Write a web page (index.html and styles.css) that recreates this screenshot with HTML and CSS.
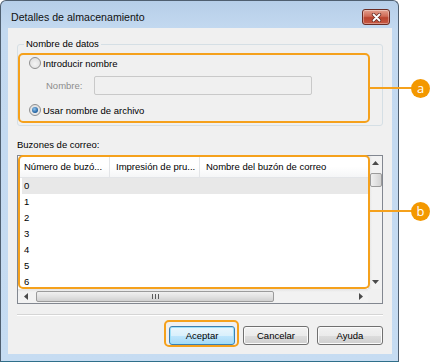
FILE: index.html
```html
<!DOCTYPE html>
<html lang="es">
<head>
    <meta charset="UTF-8">
    <meta name="viewport" content="width=device-width, initial-scale=1.0">
    <title>Detalles de almacenamiento</title>
    <link rel="stylesheet" href="styles.css">
</head>
<body>
<div class="stage">
    <div class="window">
        <div class="titlebar">
            <span class="title">Detalles de almacenamiento</span>
            <div class="close">
                <svg width="11" height="9" viewBox="0 0 11 9">
                    <path d="M2.5 1.5 L8.5 7.5 M8.5 1.5 L2.5 7.5" stroke="#6a2f27" stroke-width="3.4" stroke-linecap="round"/>
                    <path d="M2.5 1.5 L8.5 7.5 M8.5 1.5 L2.5 7.5" stroke="#fff" stroke-width="1.8" stroke-linecap="round"/>
                </svg>
            </div>
        </div>

        <div class="client">
            <fieldset class="group">
                <legend>Nombre de datos</legend>
                <div class="radio-row"><span class="radio"></span>Introducir nombre</div>
                <div class="name-row"><span class="muted">Nombre:</span><span class="field"></span></div>
                <div class="radio-row"><span class="radio checked"></span>Usar nombre de archivo</div>
            </fieldset>

            <div class="list-label">Buzones de correo:</div>
            <div class="list">
                <div class="list-body">
                    <div class="list-head">
                        <span class="col col-1">Número de buzó...</span>
                        <span class="col col-2">Impresión de pru...</span>
                        <span class="col col-3">Nombre del buzón de correo</span>
                    </div>
                    <div class="row selected">0</div>
                    <div class="row">1</div>
                    <div class="row">2</div>
                    <div class="row">3</div>
                    <div class="row">4</div>
                    <div class="row">5</div>
                    <div class="row">6</div>
                </div>
                <div class="vscroll">
                    <span class="arrow"><svg width="7" height="4" viewBox="0 0 7 4"><path d="M0 4 L3.5 0 L7 4 Z" fill="#4a4a4a"/></svg></span>
                    <span class="vthumb"></span>
                    <span class="arrow arrow-end"><svg width="7" height="4" viewBox="0 0 7 4"><path d="M0 0 L3.5 4 L7 0 Z" fill="#4a4a4a"/></svg></span>
                </div>
                <div class="hscroll">
                    <span class="arrow"><svg width="4" height="7" viewBox="0 0 4 7"><path d="M4 0 L0 3.5 L4 7 Z" fill="#4a4a4a"/></svg></span>
                    <span class="hthumb"><span class="grip"></span></span>
                    <span class="arrow arrow-end"><svg width="4" height="7" viewBox="0 0 4 7"><path d="M0 0 L4 3.5 L0 7 Z" fill="#4a4a4a"/></svg></span>
                </div>
                <div class="corner"></div>
            </div>

            <div class="separator"></div>

            <div class="buttons">
                <button class="btn btn-default">Aceptar</button>
                <button class="btn">Cancelar</button>
                <button class="btn">Ayuda</button>
            </div>
        </div>
    </div>

    <!-- marcas de referencia -->
    <div class="mark-box box-a"></div>
    <div class="mark-line line-a"></div>
    <div class="mark-dot dot-a">a</div>

    <div class="mark-box box-b"></div>
    <div class="mark-line line-b"></div>
    <div class="mark-dot dot-b">b</div>

    <div class="mark-box box-ok"></div>
</div>
</body>
</html>
```

FILE: styles.css
```css
body { margin: 0; background: #fff; font-family: "Liberation Sans", Arial, sans-serif; font-size: 9.5px; color: #000; }
.stage { position: relative; width: 431px; height: 362px; }

.window { width: 399px; height: 362px; box-sizing: border-box; border: 1px solid #4f5f70; border-bottom-color: #2f6f8a; border-radius: 6px 6px 0 0; background: linear-gradient(#b6cee8, #c3d9f0 28px, #c6dcf2); padding: 0 6px 6px 7px; display: flex; flex-direction: column; }
.titlebar { height: 27px; display: flex; align-items: flex-start; justify-content: space-between; }
.title { font-size: 10.6px; line-height: 13px; margin: 10px 0 0 3px; color: #111; }
.close { width: 28px; height: 16px; margin: 8px 2px 0 0; box-sizing: border-box; border: 1px solid #6b2c24; border-radius: 3px; background: linear-gradient(#e3a08e, #cf6a56 45%, #b9442f 55%, #c85a44); display: flex; align-items: center; justify-content: center; box-shadow: inset 0 0 0 1px rgba(255,255,255,0.35); }

.client { width: 384px; height: 326px; box-sizing: border-box; background: #f0f0f0; padding: 9px 9px 0 9px; }

.group { margin: 0; padding: 4px 0 7px 0; width: 366px; box-sizing: border-box; border: 1px solid #d5dfe5; border-radius: 3px; min-width: 0; }
.group legend { padding: 0 2px; margin-left: 6px; line-height: 14px; }
.radio-row { display: flex; align-items: center; height: 16px; padding-left: 11px; }
.radio { width: 12px; height: 12px; box-sizing: border-box; border: 1px solid #8f8f8f; border-radius: 50%; background: radial-gradient(circle at 50% 60%, #f4f4f4, #d8d8d8); margin-right: 2px; display: flex; align-items: center; justify-content: center; }
.radio.checked::after { content: ""; width: 6px; height: 6px; border-radius: 50%; background: radial-gradient(circle at 40% 35%, #8fc4ee, #1d5d9c 70%); }
.name-row { display: flex; align-items: center; height: 19px; margin: 5px 0 7px; padding-left: 28px; }
.muted { color: #8d8d8d; width: 48px; }
.field { width: 218px; height: 19px; box-sizing: border-box; border: 1px solid #c9c9c9; border-radius: 2px; background: #f0f0f0; }

.list-label { margin-top: 12px; line-height: 14px; }
.list { margin-top: 3px; width: 366px; height: 149px; box-sizing: border-box; border: 1px solid #828790; background: #fff; display: grid; grid-template-columns: 1fr 14px; grid-template-rows: 1fr 14px; }
.list-body { overflow: hidden; }
.list-head { display: flex; height: 21px; border-bottom: 1px solid #e3e5e8; background: linear-gradient(#fff, #fff 50%, #f5f6f7); }
.col { line-height: 21px; padding-left: 6px; box-sizing: border-box; border-right: 1px solid #e3e5e8; white-space: nowrap; }
.col-1 { width: 92px; }
.col-2 { width: 90px; }
.col-3 { flex: 1; border-right: none; }
.row { height: 16px; line-height: 16px; margin-left: 4px; padding-left: 2px; }
.row.selected { background: #e8e8e8; }

.vscroll { background: linear-gradient(90deg, #e3e3e3, #f2f2f2 3px, #f2f2f2); border-left: 1px solid #e0e0e0; display: flex; flex-direction: column; align-items: center; }
.vscroll .arrow { height: 14px; display: flex; align-items: center; justify-content: center; }
.vscroll .arrow-end { margin-top: auto; }
.vthumb { width: 12px; height: 14px; margin-top: 3px; box-sizing: border-box; border: 1px solid #9b9b9b; border-radius: 2px; background: linear-gradient(90deg, #f0f0f0, #e2e2e2 50%, #d2d2d2); }
.hscroll { background: linear-gradient(#e3e3e3, #f2f2f2 3px, #f2f2f2); display: flex; align-items: center; }
.hscroll .arrow { width: 16px; display: flex; align-items: center; justify-content: center; }
.hscroll .arrow-end { margin-left: auto; width: 14px; }
.hthumb { width: 238px; height: 11px; box-sizing: border-box; border: 1px solid #9b9b9b; border-radius: 2px; background: linear-gradient(#f0f0f0, #e2e2e2 50%, #d0d0d0); display: flex; align-items: center; justify-content: center; margin-left: 2px; }
.grip { width: 7px; height: 5px; background: repeating-linear-gradient(90deg, #5a5a5a 0 1px, transparent 1px 3px); }
.corner { background: #f0f0f0; }

.separator { margin-top: 10px; width: 366px; border-top: 1px solid #d5d5d5; border-bottom: 1px solid #fff; }

.buttons { display: flex; justify-content: flex-end; gap: 8px; margin-top: 10px; width: 366px; }
.btn { width: 66px; height: 19px; box-sizing: border-box; padding: 0; font-family: inherit; font-size: 9.5px; color: #000; border: 1px solid #707070; border-radius: 3px; background: linear-gradient(#f2f2f2, #ebebeb 50%, #dddddd 51%, #cfcfcf); box-shadow: inset 0 0 0 1px #fbfbfb; }
.btn-default { border-color: #3c7fb1; box-shadow: inset 0 0 0 1px #9ee0f8; background: linear-gradient(#eaf6fd, #d9f0fc 50%, #bee6fd 51%, #a7d9f5); }

.mark-box { position: absolute; border: 2px solid #f5a11c; border-radius: 5px; box-sizing: border-box; }
.mark-line { position: absolute; height: 2px; background: #f5a11c; }
.mark-dot { position: absolute; width: 19px; height: 19px; border-radius: 50%; background: #f39800; color: #fff; font-size: 13px; line-height: 18px; text-align: center; font-family: "Open Sans", sans-serif; }
.box-a { left: 18px; top: 53px; width: 352px; height: 70px; }
.line-a { left: 369px; top: 87px; width: 44px; }
.dot-a { left: 411px; top: 79px; }
.box-b { left: 18px; top: 155px; width: 352px; height: 134px; }
.line-b { left: 369px; top: 210px; width: 44px; }
.dot-b { left: 411px; top: 202px; }
.box-ok { left: 164px; top: 320px; width: 75px; height: 27px; }
```
